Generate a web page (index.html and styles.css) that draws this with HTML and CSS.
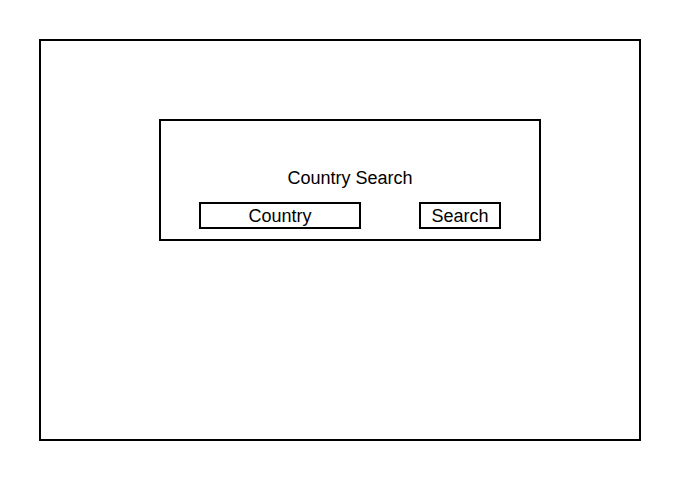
FILE: index.html
```html
<!DOCTYPE html>
<html>
<head>
<meta charset="utf-8">
<link rel="stylesheet" href="styles.css">
</head>
<body>
<div class="frame">
  <div class="panel">
    <div class="title">Country Search</div>
    <div class="row">
      <input class="field" type="text" value="Country" aria-label="Country">
      <button class="btn" type="button">Search</button>
    </div>
  </div>
</div>
</body>
</html>
```
FILE: styles.css
```css
html, body {
  margin: 0;
  padding: 0;
  background: #fff;
}
body {
  font-family: "Liberation Sans", Arial, sans-serif;
  color: #000;
}
.frame {
  box-sizing: border-box;
  margin: 39px 0 0 39px;
  width: 602px;
  height: 402px;
  border: 2px solid #000;
  padding: 78px 0 0 118px;
}
.panel {
  box-sizing: border-box;
  width: 382px;
  height: 122px;
  border: 2px solid #000;
  padding: 47px 38px 0;
  display: flex;
  flex-direction: column;
  gap: 14px;
}
.title {
  text-align: center;
  font-size: 18px;
  line-height: 20px;
  height: 20px;
}
.row {
  display: flex;
  justify-content: space-between;
}
.field, .btn {
  box-sizing: border-box;
  height: 27px;
  border: 2px solid #000;
  background: #fff;
  font-family: "Liberation Sans", Arial, sans-serif;
  font-size: 18px;
  line-height: 20px;
  color: #000;
  text-align: center;
  margin: 0;
  border-radius: 0;
  outline: none;
}
.field {
  width: 162px;
  padding: 2px 0 0;
}
.btn {
  width: 82px;
  padding: 1px 0 0;
}
```
